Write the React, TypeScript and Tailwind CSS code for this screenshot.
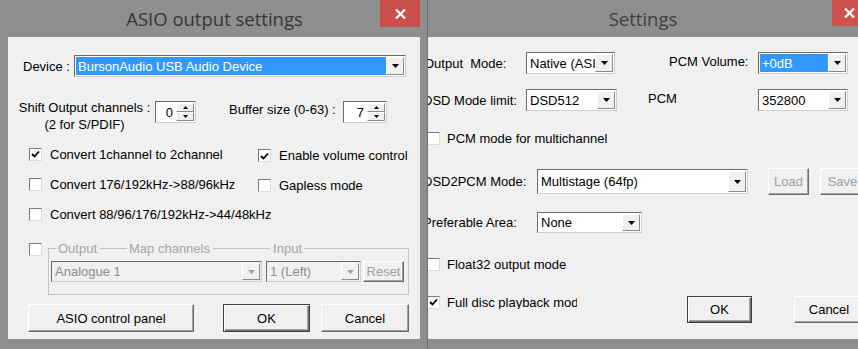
import React from "react";

const Arrow = ({ gray, small }: { gray?: boolean; small?: boolean }) => (
  <svg width={small ? 5 : 7} height={small ? 3 : 4} viewBox={small ? "0 0 5 3" : "0 0 7 4"}>
    <path d={small ? "M0 0H5L2.5 3Z" : "M0 0H7L3.5 4Z"} fill={gray ? "#a3a3a3" : "#000"} />
  </svg>
);

const UpArrow = () => (
  <svg width="5" height="3" viewBox="0 0 5 3">
    <path d="M0 3H5L2.5 0Z" fill="#000" />
  </svg>
);

const Combo = ({
  text,
  w,
  h = "h-[22px]",
  selected,
  disabled,
}: {
  text: string;
  w: string;
  h?: string;
  selected?: boolean;
  disabled?: boolean;
}) => (
  <div
    className={`${w} ${h} shrink-0 flex items-stretch border border-t-[#6b6b6b] border-l-[#6b6b6b] border-r-[#cfcfcf] border-b-[#cfcfcf] p-px ${
      disabled ? "bg-[#f0f0f0]" : "bg-white"
    }`}
  >
    <div
      className={`flex-1 min-w-0 flex items-center px-[2px] whitespace-nowrap overflow-hidden ${
        selected ? "bg-[#3399ff] text-white" : disabled ? "text-[#8d8d8d]" : "text-black"
      }`}
    >
      {text}
    </div>
    <div className="w-[18px] shrink-0 flex items-center justify-center bg-[#f0f0f0] border border-t-white border-l-white border-r-[#8a8a8a] border-b-[#8a8a8a]">
      <Arrow gray={disabled} />
    </div>
  </div>
);

const Check = ({ checked }: { checked?: boolean }) => (
  <div className="w-[13px] h-[13px] shrink-0 bg-white border border-t-[#7a7a7a] border-l-[#7a7a7a] border-r-[#dcdcdc] border-b-[#dcdcdc] flex items-center justify-center">
    {checked && (
      <svg width="9" height="8" viewBox="0 0 9 8">
        <path d="M1 4L3.5 6.5L8 1.5" stroke="#000" strokeWidth="1.8" fill="none" />
      </svg>
    )}
  </div>
);

const Btn = ({
  children,
  w,
  h = "h-[28px]",
  def,
  disabled,
}: {
  children: React.ReactNode;
  w: string;
  h?: string;
  def?: boolean;
  disabled?: boolean;
}) => (
  <div
    className={`${w} ${h} shrink-0 flex items-center justify-center bg-[#f0f0f0] ${
      def
        ? "border border-[#404040] shadow-[inset_1px_1px_0_#ffffff,inset_-1px_-1px_0_#6f6f6f,inset_-2px_-2px_0_#a0a0a0]"
        : "border border-t-white border-l-white border-r-[#6a6a6a] border-b-[#6a6a6a] shadow-[inset_-1px_-1px_0_#a0a0a0]"
    } ${disabled ? "text-[#a0a0a0]" : "text-black"}`}
  >
    {children}
  </div>
);

const Spin = ({ value, w }: { value: string; w: string }) => (
  <div className={`${w} h-[22px] shrink-0 flex bg-white border border-t-[#6b6b6b] border-l-[#6b6b6b] border-r-[#cfcfcf] border-b-[#cfcfcf] p-px`}>
    <div className="flex-1 flex items-center justify-end pr-[3px]">{value}</div>
    <div className="w-[18px] flex flex-col">
      <div className="flex-1 flex items-center justify-center bg-[#f0f0f0] border border-t-white border-l-white border-r-[#8a8a8a] border-b-[#8a8a8a]">
        <UpArrow />
      </div>
      <div className="flex-1 flex items-center justify-center bg-[#f0f0f0] border border-t-white border-l-white border-r-[#8a8a8a] border-b-[#8a8a8a]">
        <Arrow small />
      </div>
    </div>
  </div>
);

const CloseX = () => (
  <svg width="11" height="10" viewBox="0 0 11 10">
    <path d="M1 0.5L10 9.5M10 0.5L1 9.5" stroke="#fff" strokeWidth="2.2" />
  </svg>
);

const CheckRow = ({ checked, label, shift }: { checked?: boolean; label: string; shift?: boolean }) => (
  <div className={`h-[30px] flex items-center gap-[8px] whitespace-nowrap ${shift ? "pt-[3px]" : ""}`}>
    <Check checked={checked} />
    <span>{label}</span>
  </div>
);

export default function App() {
  return (
    <div className="w-[858px] h-[349px] overflow-hidden flex bg-[#8e8e8e] text-[13px] leading-none font-['Liberation_Sans',Arial,sans-serif] text-black">
      {/* ASIO output settings */}
      <div className="w-[428px] shrink-0 h-full flex flex-col border-r border-r-[#707070]">
        <div className="relative h-[37px] shrink-0 flex items-center justify-center pt-[1px] pl-[2px]">
          <span className="text-[18.5px] text-[#363636] font-['Open_Sans',sans-serif]">ASIO output settings</span>
          <div className="absolute top-0 right-[7px] w-[40px] h-[27px] bg-[#c9504b] flex items-center justify-center">
            <CloseX />
          </div>
        </div>
        <div className="ml-[8px] w-[412px] h-[302px] shrink-0 bg-[#f0f0f0] flex flex-col">
          {/* device */}
          <div className="mt-[18px] h-[22px] flex items-center">
            <span className="ml-[15px] w-[51px]">Device :</span>
            <Combo text="BursonAudio USB Audio Device" w="w-[332px]" selected />
          </div>

          {/* spin row */}
          <div className="mt-[22px] h-[35px] flex items-start">
            <div className="ml-[10px] w-[133px] text-center leading-[17px] whitespace-nowrap">
              <div>Shift Output channels :</div>
              <div>(2 for S/PDIF)</div>
            </div>
            <div className="ml-[4px] mt-[2px]">
              <Spin value="0" w="w-[41px]" />
            </div>
            <span className="ml-[33px] mt-[2px] w-[114px] leading-[17px]">Buffer size (0-63) :</span>
            <div className="mt-[2px]">
              <Spin value="7" w="w-[44px]" />
            </div>
          </div>

          {/* checkboxes */}
          <div className="mt-[5px] ml-[21px] grid grid-cols-[229px_1fr]">
            <CheckRow checked label="Convert 1channel to 2channel" />
            <CheckRow checked shift label="Enable volume control" />
            <CheckRow label="Convert 176/192kHz->88/96kHz" />
            <CheckRow shift label="Gapless mode" />
            <CheckRow label="Convert 88/96/176/192kHz->44/48kHz" />
            <div />
          </div>

          {/* map channels */}
          <div className="mt-[12px] ml-[21px] flex items-start">
            <div className="mt-[2px]">
              <Check />
            </div>
            <div className="ml-[6px] w-[361px] flex flex-col text-[#a6a6a6]">
              <div className="h-[14px] flex items-center whitespace-nowrap">
                <div className="w-[9px] h-[7px] self-end border-l border-t border-[#c4c4c4]" />
                <span className="px-[1px]">Output</span>
                <div className="w-[27px] h-px bg-[#c4c4c4] mx-[2px]" />
                <span>Map channels</span>
                <div className="flex-1 h-px bg-[#c4c4c4] mx-[3px]" />
                <span className="mr-[2px]">Input</span>
                <div className="w-[105px] h-[7px] self-end border-r border-t border-[#c4c4c4]" />
              </div>
              <div className="h-[40px] border-l border-r border-b border-[#c4c4c4] pt-[6px] flex items-start">
                <div className="ml-[2px]">
                  <Combo text="Analogue 1" w="w-[211px]" h="h-[21px]" disabled />
                </div>
                <div className="ml-[4px]">
                  <Combo text="1 (Left)" w="w-[95px]" h="h-[21px]" disabled />
                </div>
                <div className="ml-[2px]">
                  <Btn w="w-[41px]" h="h-[21px]" disabled>
                    Reset
                  </Btn>
                </div>
              </div>
            </div>
          </div>

          {/* buttons */}
          <div className="mt-[9px] h-[28px] flex">
            <div className="ml-[20px]">
              <Btn w="w-[166px]">ASIO control panel</Btn>
            </div>
            <div className="ml-[29px]">
              <Btn w="w-[87px]" def>
                OK
              </Btn>
            </div>
            <div className="ml-[11px]">
              <Btn w="w-[88px]">Cancel</Btn>
            </div>
          </div>
        </div>
      </div>

      {/* Settings */}
      <div className="w-[430px] shrink-0 h-full flex flex-col overflow-hidden">
        <div className="relative h-[37px] shrink-0 flex items-center justify-center pt-[1px]">
          <span className="text-[18.5px] text-[#404040] font-['Open_Sans',sans-serif]">Settings</span>
          <div className="absolute top-0 right-[-14px] w-[40px] h-[26px] bg-[#d0524c] flex items-center justify-start pl-[12px]">
            <CloseX />
          </div>
        </div>
        <div className="w-[430px] h-[302px] shrink-0 bg-[#f0f0f0] overflow-hidden flex flex-col">
          <div className="mt-[15px] h-[22px] flex items-center whitespace-nowrap">
            <span className="ml-[-4px] w-[102px] shrink-0 whitespace-pre">Output  Mode:</span>
            <Combo text="Native (ASI" w="w-[89px]" />
            <span className="ml-[54px] w-[89px] shrink-0 pb-[4px]">PCM Volume:</span>
            <Combo text="+0dB" w="w-[90px]" selected />
          </div>

          <div className="mt-[15px] h-[22px] flex items-center whitespace-nowrap">
            <span className="ml-[-5px] w-[103px] shrink-0">DSD Mode limit:</span>
            <Combo text="DSD512" w="w-[91px]" />
            <span className="ml-[31px] w-[110px] shrink-0 pb-[3px]">PCM</span>
            <Combo text="352800" w="w-[90px]" />
          </div>

          <div className="mt-[16px] h-[22px] flex items-center gap-[7px] whitespace-nowrap">
            <div className="ml-[-1px]">
              <Check />
            </div>
            <span>PCM mode for multichannel</span>
          </div>

          <div className="mt-[19px] h-[27px] flex items-center whitespace-nowrap">
            <span className="ml-[-5px] w-[114px] shrink-0">DSD2PCM Mode:</span>
            <Combo text="Multistage (64fp)" w="w-[211px]" h="h-[25px]" />
            <div className="ml-[20px]">
              <Btn w="w-[41px]" h="h-[27px]" disabled>
                Load
              </Btn>
            </div>
            <div className="ml-[11px]">
              <Btn w="w-[45px]" h="h-[27px]" disabled>
                Save
              </Btn>
            </div>
          </div>

          <div className="mt-[17px] h-[21px] flex items-center whitespace-nowrap">
            <span className="ml-[-5px] w-[114px] shrink-0">Preferable Area:</span>
            <Combo text="None" w="w-[105px]" h="h-[21px]" />
          </div>

          <div className="mt-[21px] h-[20px] flex items-center gap-[7px] whitespace-nowrap">
            <div className="ml-[-1px]">
              <Check />
            </div>
            <span>Float32 output mode</span>
          </div>

          <div className="mt-[20px] flex items-start whitespace-nowrap">
            <div className="h-[16px] flex items-center gap-[7px]">
              <div className="ml-[-1px]">
                <Check checked />
              </div>
              <span className="w-[130px] overflow-hidden">Full disc playback mode</span>
            </div>
            <div className="ml-[110px] mt-[2px]">
              <Btn w="w-[65px]" h="h-[27px]" def>
                OK
              </Btn>
            </div>
            <div className="ml-[42px] mt-[2px]">
              <Btn w="w-[70px]" h="h-[27px]">
                Cancel
              </Btn>
            </div>
          </div>
        </div>
      </div>
    </div>
  );
}
